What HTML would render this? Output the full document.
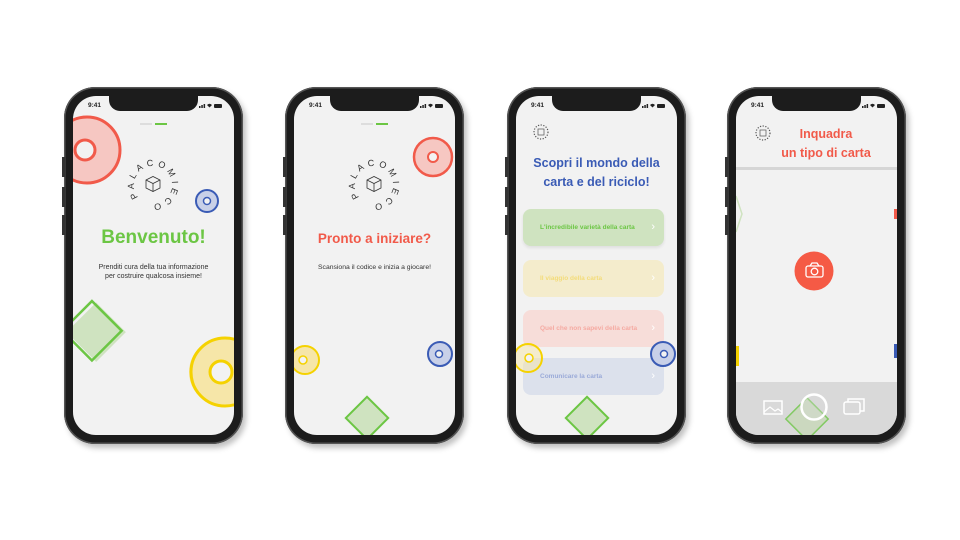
<!DOCTYPE html>
<html><head><meta charset="utf-8">
<style>
*{margin:0;padding:0;box-sizing:border-box}
body{width:960px;height:540px;background:#fff;position:relative;overflow:hidden;font-family:"Liberation Sans",sans-serif}
.phone{position:absolute;top:87px;width:179px;height:357px;border-radius:31px;background:#1c1c1c;box-shadow:0 0 0 1.5px #555 inset,3px 4px 6px rgba(0,0,0,.25)}
.phone:before{content:"";position:absolute;left:-2px;top:70px;width:3px;height:20px;background:#333;box-shadow:0 30px 0 #333,0 58px 0 #333}
.screen{position:absolute;left:9px;top:9px;width:161px;height:339px;border-radius:23px;background:#f2f2f2;overflow:hidden}
.notch{position:absolute;left:36px;top:0;width:89px;height:15px;background:#1c1c1c;border-radius:0 0 11px 11px;z-index:5}
.time{position:absolute;left:15px;top:6px;font-size:6.5px;font-weight:bold;color:#222;z-index:6}
.abs{position:absolute}
.c{text-align:center;width:161px;left:0}
svg{position:absolute;left:0;top:0}
.btn{position:absolute;left:7px;width:141px;height:37px;border-radius:8px;font-size:6.5px;font-weight:bold;line-height:37px;padding-left:17px}
.btn span{position:absolute;right:9px;top:0;font-size:11px;font-weight:normal;color:#fff}
</style></head><body>

<!-- Phone 1 -->
<div class="phone" style="left:64px">
 <div class="screen">
  <div class="notch"></div><div class="time">9:41</div>
  <svg width="161" height="339">
   <circle cx="14" cy="54" r="33" fill="#f6c7c2" stroke="#f15a4a" stroke-width="3"/>
   <circle cx="12" cy="54" r="10" fill="#f2f2f2" stroke="#f15a4a" stroke-width="3"/>
   <rect x="67" y="27" width="12" height="2" fill="#ddd"/><rect x="82" y="27" width="12" height="2" fill="#6cc644"/>
   <circle cx="134" cy="105" r="11" fill="#c8d0e8" stroke="#3a5bb5" stroke-width="2"/>
   <circle cx="134" cy="105" r="3.5" fill="#f2f2f2" stroke="#3a5bb5" stroke-width="1.5"/>
   <rect x="5" y="218" width="42" height="42" fill="#cfe3c0" transform="rotate(45 26 239) translate(-4 0)"/>
   <rect x="5" y="218" width="42" height="42" fill="none" stroke="#6cc644" stroke-width="2.5" transform="rotate(45 26 239) translate(-8 2)"/>
   <circle cx="150" cy="276" r="34" fill="#f6e6a8"/>
   <circle cx="152" cy="276" r="34" fill="none" stroke="#f5d200" stroke-width="3"/>
   <circle cx="148" cy="276" r="11" fill="#f2f2f2" stroke="#f5d200" stroke-width="3"/>
   <defs><path id="lc1" d="M80 89 m-19 0 a19 19 0 1 1 38 0 a19 19 0 1 1 -38 0"/></defs>
   <g transform="rotate(-40 80 89)"><text font-size="9" fill="#333" letter-spacing="3.6"><textPath href="#lc1">PALACOMIECO</textPath></text></g>
   <path d="M73 84 l7-3.5 7 3.5 v8 l-7 3.5 -7-3.5z M73 84 l7 3.5 7-3.5 M80 87.5 v8" fill="none" stroke="#333" stroke-width=".8"/>
   <g fill="#222"><rect x="126" y="10" width="1.5" height="2"/><rect x="128.3" y="9" width="1.5" height="3"/><rect x="130.6" y="8" width="1.5" height="4"/><path d="M134 9 Q136.5 6.5 139 9 L136.5 11.5Z"/><rect x="141" y="8" width="8" height="4" rx="1"/></g>
  </svg>
  <div class="abs c" style="top:131px;font-size:19px;font-weight:bold;color:#6cc644">Benvenuto!</div>
  <div class="abs c" style="top:167px;font-size:7px;line-height:9px;color:#333">Prenditi cura della tua informazione<br>per costruire qualcosa insieme!</div>
 </div>
</div>

<!-- Phone 2 -->
<div class="phone" style="left:285px">
 <div class="screen">
  <div class="notch"></div><div class="time">9:41</div>
  <svg width="161" height="339">
   <rect x="67" y="27" width="12" height="2" fill="#ddd"/><rect x="82" y="27" width="12" height="2" fill="#6cc644"/>
   <circle cx="139" cy="61" r="19" fill="#f6c7c2" stroke="#f15a4a" stroke-width="2.5"/>
   <circle cx="139" cy="61" r="5" fill="#f2f2f2" stroke="#f15a4a" stroke-width="2"/>
   <circle cx="11" cy="264" r="14" fill="#f6e6a8" stroke="#f5d200" stroke-width="2"/>
   <circle cx="9" cy="264" r="4" fill="#f2f2f2" stroke="#f5d200" stroke-width="1.5"/>
   <circle cx="146" cy="258" r="12" fill="#c8d0e8" stroke="#3a5bb5" stroke-width="2"/>
   <circle cx="145" cy="258" r="3.5" fill="#f2f2f2" stroke="#3a5bb5" stroke-width="1.5"/>
   <rect x="58" y="307" width="30" height="30" fill="#cfe3c0" stroke="#6cc644" stroke-width="2" transform="rotate(45 73 322)"/>
   <defs><path id="lc2" d="M80 89 m-19 0 a19 19 0 1 1 38 0 a19 19 0 1 1 -38 0"/></defs>
   <g transform="rotate(-40 80 89)"><text font-size="9" fill="#333" letter-spacing="3.6"><textPath href="#lc2">PALACOMIECO</textPath></text></g>
   <path d="M73 84 l7-3.5 7 3.5 v8 l-7 3.5 -7-3.5z M73 84 l7 3.5 7-3.5 M80 87.5 v8" fill="none" stroke="#333" stroke-width=".8"/>
   <g fill="#222"><rect x="126" y="10" width="1.5" height="2"/><rect x="128.3" y="9" width="1.5" height="3"/><rect x="130.6" y="8" width="1.5" height="4"/><path d="M134 9 Q136.5 6.5 139 9 L136.5 11.5Z"/><rect x="141" y="8" width="8" height="4" rx="1"/></g>
  </svg>
  <div class="abs c" style="top:135px;font-size:13.5px;font-weight:bold;color:#f15a4a">Pronto a iniziare?</div>
  <div class="abs c" style="top:168px;font-size:6.8px;color:#333">Scansiona il codice e inizia a giocare!</div>
 </div>
</div>

<!-- Phone 3 -->
<div class="phone" style="left:507px">
 <div class="screen">
  <div class="notch"></div><div class="time">9:41</div>
  <svg width="161" height="339">
   <circle cx="25" cy="36" r="7" fill="none" stroke="#555" stroke-width="1.2" stroke-dasharray="1.2 1.5"/>
   <rect x="22" y="33" width="6" height="6" fill="none" stroke="#555" stroke-width=".7"/>
   <g fill="#222"><rect x="126" y="10" width="1.5" height="2"/><rect x="128.3" y="9" width="1.5" height="3"/><rect x="130.6" y="8" width="1.5" height="4"/><path d="M134 9 Q136.5 6.5 139 9 L136.5 11.5Z"/><rect x="141" y="8" width="8" height="4" rx="1"/></g>
  </svg>
  <div class="abs c" style="top:58px;font-size:12.5px;line-height:19px;font-weight:bold;color:#3a5bb5">Scopri il mondo della<br>carta e del riciclo!</div>
  <div class="btn" style="top:113px;background:#cfe3c0;color:#6cc644;box-shadow:0 2px 3px rgba(0,0,0,.08)">L'incredibile varietà della carta<span>›</span></div>
  <div class="btn" style="top:164px;background:#f4eccc;color:#f3dc7a">Il viaggio della carta<span>›</span></div>
  <div class="btn" style="top:214px;background:#f7ddd9;color:#f5aaa2">Quel che non sapevi della carta<span>›</span></div>
  <div class="btn" style="top:262px;background:#dce1ec;color:#9aaad8">Comunicare la carta<span>›</span></div>
  <svg width="161" height="339">
   <circle cx="12" cy="262" r="14" fill="rgba(246,230,168,.5)" stroke="#f5d200" stroke-width="2"/>
   <circle cx="13" cy="262" r="4" fill="#f2f2f2" stroke="#f5d200" stroke-width="1.5"/>
   <circle cx="147" cy="258" r="12" fill="#c8d0e8" stroke="#3a5bb5" stroke-width="2"/>
   <circle cx="148" cy="258" r="3.5" fill="#f2f2f2" stroke="#3a5bb5" stroke-width="1.5"/>
   <rect x="56" y="307" width="30" height="30" fill="#cfe3c0" stroke="#6cc644" stroke-width="2" transform="rotate(45 71 322)"/>
  </svg>
 </div>
</div>

<!-- Phone 4 -->
<div class="phone" style="left:727px">
 <div class="screen">
  <div class="notch"></div><div class="time">9:41</div>
  <svg width="161" height="339">
   <circle cx="27" cy="37" r="7" fill="none" stroke="#555" stroke-width="1.2" stroke-dasharray="1.2 1.5"/>
   <rect x="24" y="34" width="6" height="6" fill="none" stroke="#555" stroke-width=".7"/>
   <g fill="#222"><rect x="126" y="10" width="1.5" height="2"/><rect x="128.3" y="9" width="1.5" height="3"/><rect x="130.6" y="8" width="1.5" height="4"/><path d="M134 9 Q136.5 6.5 139 9 L136.5 11.5Z"/><rect x="141" y="8" width="8" height="4" rx="1"/></g>
   <rect x="0" y="71" width="161" height="3" fill="#d6d6d6"/>
   <path d="M0 100 l6 18 -6 18" fill="none" stroke="#cfe3c0" stroke-width="1.5"/>
   <rect x="158" y="113" width="3" height="10" fill="#f15a4a"/>
   <rect x="158" y="248" width="3" height="14" fill="#3a5bb5"/>
   <rect x="0" y="250" width="3" height="20" fill="#f5d200"/>
   <circle cx="78" cy="175" r="19.5" fill="#f55a45"/>
   <rect x="70" y="170" width="17" height="11" rx="2" fill="none" stroke="#fff" stroke-width="1.3"/>
   <path d="M74 170 l2-3 h5 l2 3" fill="none" stroke="#fff" stroke-width="1.3"/>
   <circle cx="78.5" cy="175.5" r="3.3" fill="none" stroke="#fff" stroke-width="1.3"/>
   <rect x="0" y="286" width="161" height="53" fill="#d9d9d9"/>
   <rect x="56" y="308" width="30" height="30" fill="#c7d8b8" stroke="#6cc644" stroke-width="1.5" transform="rotate(45 71 323)" opacity=".8"/>
   <rect x="28" y="305" width="18" height="13" fill="none" stroke="#fff" stroke-width="1.5"/>
   <path d="M28 316 l6-5 5 4 3-2 4 3" fill="none" stroke="#fff" stroke-width="1.2"/>
   <circle cx="78" cy="311" r="12.5" fill="#d9d9d9" fill-opacity=".3" stroke="#fff" stroke-width="2.5"/>
   <rect x="108" y="306" width="16" height="12" rx="2" fill="none" stroke="#fff" stroke-width="1.5"/>
   <path d="M112 306 v-3 h16 v12 h-4" fill="none" stroke="#fff" stroke-width="1.5"/>
  </svg>
  <div class="abs" style="left:30px;width:120px;text-align:center;top:29px;font-size:12.5px;line-height:19px;font-weight:bold;color:#f15a4a">Inquadra<br>un tipo di carta</div>
 </div>
</div>

</body></html>
